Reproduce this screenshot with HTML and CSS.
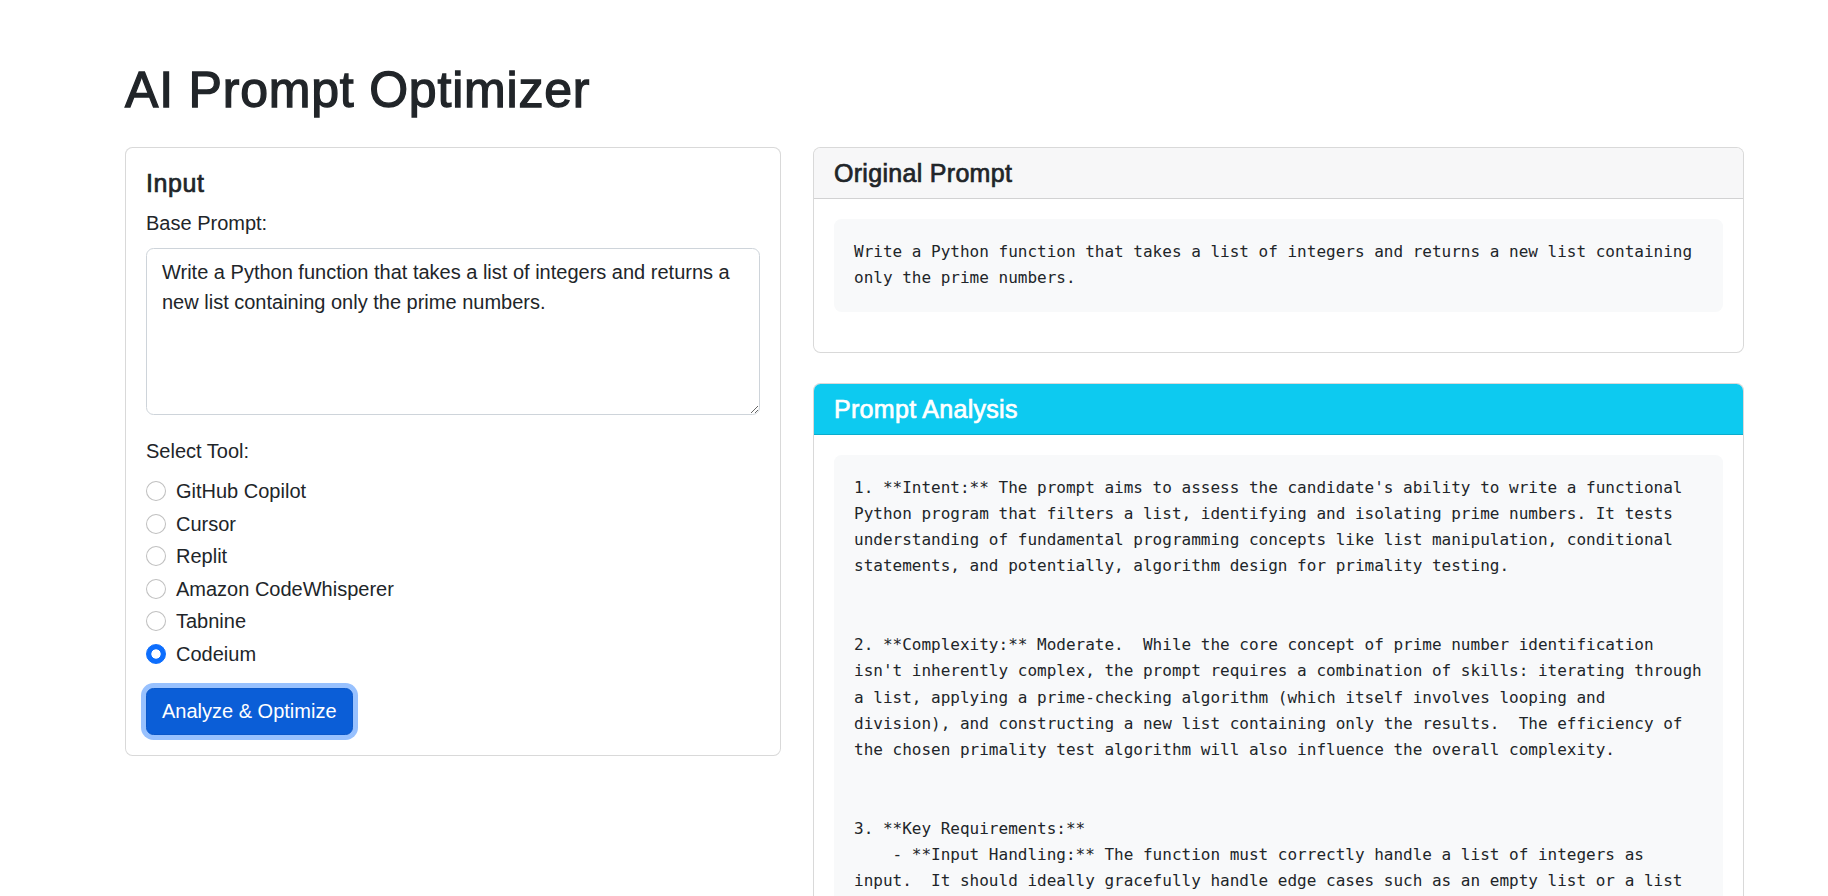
FILE: index.html
```html
<!DOCTYPE html>
<html lang="en">
<head>
<meta charset="utf-8">
<title>AI Prompt Optimizer</title>
<link rel="stylesheet" href="styles.css">
</head>
<body>
<div class="page">
  <h1 class="title">AI Prompt Optimizer</h1>
  <div class="layout">
    <div class="col-input">
      <div class="card">
        <div class="card-body">
          <h5 class="card-title">Input</h5>
          <label class="form-label" for="prompt">Base Prompt:</label>
          <textarea id="prompt" class="prompt-input" rows="5">Write a Python function that takes a list of integers and returns a new list containing only the prime numbers.</textarea>
          <div class="form-label">Select Tool:</div>
          <div class="tools">
            <label class="check"><input class="radio" type="radio" name="tool"><span>GitHub Copilot</span></label>
            <label class="check"><input class="radio" type="radio" name="tool"><span>Cursor</span></label>
            <label class="check"><input class="radio" type="radio" name="tool"><span>Replit</span></label>
            <label class="check"><input class="radio" type="radio" name="tool"><span>Amazon CodeWhisperer</span></label>
            <label class="check"><input class="radio" type="radio" name="tool"><span>Tabnine</span></label>
            <label class="check"><input class="radio" type="radio" name="tool" checked><span>Codeium</span></label>
          </div>
          <button class="btn-primary" type="button">Analyze &amp; Optimize</button>
        </div>
      </div>
    </div>
    <div class="col-output">
      <div class="card card-gap">
        <div class="card-header">
          <h5 class="header-title">Original Prompt</h5>
        </div>
        <div class="card-body">
          <pre class="code-box">Write a Python function that takes a list of integers and returns a new list containing only the prime numbers.</pre>
        </div>
      </div>
      <div class="card">
        <div class="card-header header-info">
          <h5 class="header-title">Prompt Analysis</h5>
        </div>
        <div class="card-body">
          <pre class="code-box">1. **Intent:** The prompt aims to assess the candidate's ability to write a functional
Python program that filters a list, identifying and isolating prime numbers. It tests
understanding of fundamental programming concepts like list manipulation, conditional
statements, and potentially, algorithm design for primality testing.


2. **Complexity:** Moderate.  While the core concept of prime number identification
isn't inherently complex, the prompt requires a combination of skills: iterating through
a list, applying a prime-checking algorithm (which itself involves looping and
division), and constructing a new list containing only the results.  The efficiency of
the chosen primality test algorithm will also influence the overall complexity.


3. **Key Requirements:**
    - **Input Handling:** The function must correctly handle a list of integers as
input.  It should ideally gracefully handle edge cases such as an empty list or a list
containing negative numbers or zero.
    - **Prime Number Identification:** The core logic must accurately determine
whether each integer in the list is prime.</pre>
        </div>
      </div>
    </div>
  </div>
</div>
</body>
</html>
```
FILE: styles.css
```css
html {
  scrollbar-width: none;
}

body {
  margin: 0;
  background: #fff;
  color: #212529;
  font-family: "Segoe UI", "Liberation Sans", Arial, sans-serif;
  font-size: 20px;
  line-height: 30px;
}

.page {
  width: 1619px;
  margin-left: 125px;
  padding-top: 60px;
}

.title {
  margin: 0 0 27px;
  font-size: 50px;
  line-height: 60px;
  font-weight: 500;
  letter-spacing: 0.8px;
  -webkit-text-stroke: 1.3px #212529;
}

.layout {
  display: flex;
  align-items: flex-start;
  gap: 32px;
}

.col-input {
  width: 656px;
  flex: none;
}

.col-output {
  flex: 1;
  min-width: 0;
}

.card {
  background: #fff;
  border: 1px solid rgba(0, 0, 0, 0.15);
  border-radius: 7.5px;
}

.card-gap {
  margin-bottom: 30px;
}

.card-body {
  padding: 20px;
}

.card-title {
  margin: 0 0 10px;
  font-size: 25px;
  line-height: 30px;
  font-weight: 500;
  letter-spacing: 0.6px;
  -webkit-text-stroke: 0.7px #212529;
}

.card-header {
  padding: 10px 20px;
  background: #f7f7f8;
  border-bottom: 1px solid rgba(0, 0, 0, 0.15);
  border-radius: 6.5px 6.5px 0 0;
}

.header-info {
  background: #0dcaf0;
  color: #fff;
}

.header-title {
  margin: 0;
  font-size: 25px;
  line-height: 30px;
  font-weight: 500;
  letter-spacing: 0.3px;
  -webkit-text-stroke: 0.7px currentColor;
}

.form-label {
  display: block;
  margin-bottom: 10px;
}

.prompt-input {
  display: block;
  box-sizing: border-box;
  width: 100%;
  height: 167px;
  margin: 0 0 21px;
  padding: 7.5px 15px;
  border: 1px solid #ced4da;
  border-radius: 7.5px;
  font: inherit;
  line-height: 30px;
  color: #212529;
  resize: vertical;
  outline: none;
}

.tools {
  display: flex;
  flex-direction: column;
  gap: 2.5px;
  margin: 2px 0 19px;
}

.check {
  display: flex;
  align-items: center;
  gap: 10px;
  height: 30px;
}

.radio {
  appearance: none;
  -webkit-appearance: none;
  flex: none;
  box-sizing: border-box;
  width: 20px;
  height: 20px;
  margin: 0;
  border: 1px solid rgba(0, 0, 0, 0.25);
  border-radius: 50%;
  background: #fff;
}

.radio:checked {
  border-color: #0d6efd;
  background: radial-gradient(circle, #fff 0 4.3px, #0d6efd 5px);
}

.btn-primary {
  display: inline-block;
  padding: 7.5px 15px;
  border: 1px solid #0a58ca;
  border-radius: 7.5px;
  background: #0b5ed7;
  color: #fff;
  font: inherit;
  line-height: 30px;
  box-shadow: 0 0 0 5px rgba(49, 132, 253, 0.5);
  cursor: pointer;
}

.code-box {
  margin: 0 0 20px;
  padding: 20px;
  background: #f8f9fa;
  border-radius: 7.5px;
  font-family: "DejaVu Sans Mono", "Liberation Mono", monospace;
  font-size: 16px;
  line-height: 26.25px;
  color: #212529;
  white-space: pre-wrap;
  word-wrap: break-word;
}
```
